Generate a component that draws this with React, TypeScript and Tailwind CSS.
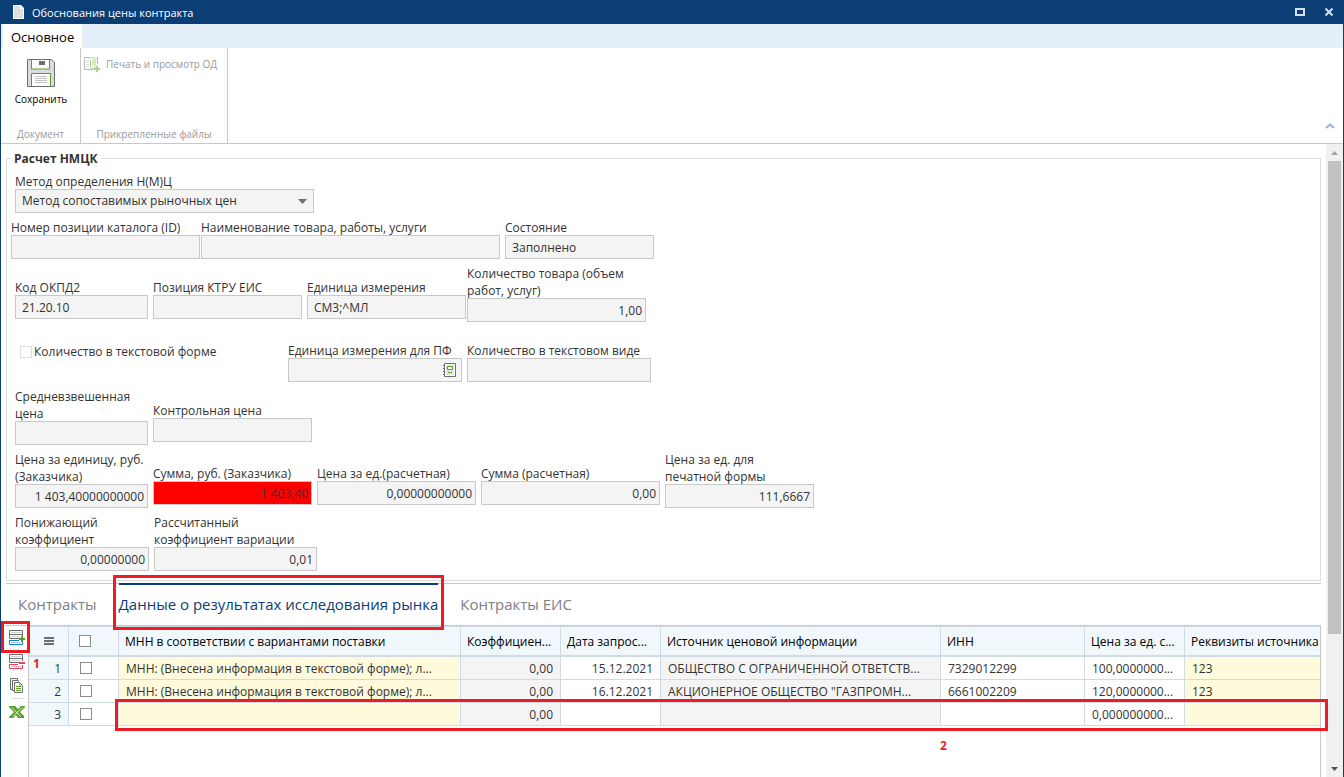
import { useId } from 'react';

interface FieldProps {
  label: string;
  value?: string;
  width: string;
  align?: 'left' | 'right';
  raised?: boolean;
  invalid?: boolean;
  picker?: boolean;
}

interface ResearchRow {
  id: number;
  mnn: string;
  ratio: string;
  date: string;
  source: string;
  inn: string;
  price: string;
  details: string;
}

const rows: ResearchRow[] = [
  {
    id: 1,
    mnn: 'МНН: (Внесена информация в текстовой форме); л...',
    ratio: '0,00',
    date: '15.12.2021',
    source: 'ОБЩЕСТВО С ОГРАНИЧЕННОЙ ОТВЕТСТВ...',
    inn: '7329012299',
    price: '100,0000000...',
    details: '123',
  },
  {
    id: 2,
    mnn: 'МНН: (Внесена информация в текстовой форме); л...',
    ratio: '0,00',
    date: '16.12.2021',
    source: 'АКЦИОНЕРНОЕ ОБЩЕСТВО "ГАЗПРОМН...',
    inn: '6661002209',
    price: '120,0000000...',
    details: '123',
  },
  { id: 3, mnn: '', ratio: '0,00', date: '', source: '', inn: '', price: '0,000000000...', details: '' },
];

const columns = [
  { title: 'МНН в соответствии с вариантами поставки', width: 'w-[342px]' },
  { title: 'Коэффициен...', width: 'w-[100px]' },
  { title: 'Дата запрос...', width: 'w-[100px]' },
  { title: 'Источник ценовой информации', width: 'w-[280px]' },
  { title: 'ИНН', width: 'w-[144px]' },
  { title: 'Цена за ед. с...', width: 'w-[100px]' },
  { title: 'Реквизиты источника', width: '' },
];

const PageIcon = () => (
  <svg width="11" height="14" viewBox="0 0 11 14">
    <path d="M0 0h8l3 3v11H0z" fill="#fff" />
    <path d="M1 1h6v3h3v9H1z" fill="#dedede" />
  </svg>
);

const SaveIcon = () => (
  <svg width="28" height="28" viewBox="0 0 28 28" fill="none">
    <path d="M.5.5h24l3 3v24H.5z" fill="#dcdcdc" stroke="#6d6e71" />
    <path d="M5 1h17v9H5z" fill="#fff" />
    <path d="M4.500 1v9h18V1" stroke="#5b9f22" />
    <path d="M12 2h6v4h-6z" fill="#6d6e71" />
    <path d="M5 15h18v12H5z" fill="#fff" />
    <path d="M4.500 27V14.500h19V27" stroke="#5b9f22" />
    <path d="M8 17.500h12M8 19.500h12M8 21.500h12M8 23.500h12" stroke="#c4c4c4" />
  </svg>
);

const AttachIcon = () => (
  <svg width="16" height="16" viewBox="0 0 16 16" fill="none">
    <path d="M6 1.500H.5v12H9M12.500 1.500h1v7" stroke="#b5b6b8" />
    <path d="M2 4.500h3M2 6.500h3M2 8.500h3M2 10.500h3" stroke="#d8d8d8" />
    <path d="M6.500 4v6.500a2 2 0 0 0 4.500 0V3a2.500 2.500 0 0 0-4.500 0M9 4v5" stroke="#acd08e" />
    <path d="M10 13h6M13 10v6" stroke="#acd08e" strokeWidth="2" />
  </svg>
);

const AddRowIcon = () => (
  <svg width="16" height="16" viewBox="0 0 16 16" fill="none">
    <path d="M10 8.500H.5v-8h13v4H.5M13.500 4v2" stroke="#6d6e71" />
    <path d="M2 2.500h10M2 6.500h9" stroke="#d0d0d0" />
    <path d="M10 10.500H.5v4h13V12" stroke="#1383cf" />
    <path d="M2 12.500h10" stroke="#a9d2ee" />
    <path d="M10 9h6M13 6v6" stroke="#5b9f22" strokeWidth="2" />
  </svg>
);

const RemoveRowIcon = () => (
  <svg width="16" height="16" viewBox="0 0 16 16" fill="none">
    <path d="M10 8.500H.5v-8h13v4H.5M13.500 4v3" stroke="#6d6e71" />
    <path d="M2 2.500h10M2 6.500h10" stroke="#d0d0d0" />
    <path d="M9 10.500H.5v4h13V11" stroke="#ee4056" />
    <path d="M2 12.500h10" stroke="#f6b3bb" />
    <path d="M10 9h6" stroke="#ee4056" strokeWidth="2" />
  </svg>
);

const CopyIcon = () => (
  <svg width="14" height="15" viewBox="0 0 14 15" fill="none">
    <path d="M2 11.500H.5V.5h7V2" stroke="#6d6e71" />
    <path d="M4 12.500H2.500v-10h6v1" stroke="#6d6e71" />
    <path d="M4.500 4.500h5l3 3v7h-8z" fill="#fff" stroke="#6d6e71" />
    <path d="M9.500 5v2.500h3" stroke="#b5b6b8" />
    <path d="M6 8.500h5M6 10.500h5M6 12.500h5" stroke="#5b9f22" />
  </svg>
);

const ExcelIcon = () => (
  <svg width="16" height="12" viewBox="0 0 16 12">
    <path d="M0 0h6l3 3 3-3h4v1l-5 5 4 4v2H9L7 9l-3 3H0v-1l5-5-5-5z" fill="#5b9f22" />
    <path d="M3 1.500 11.500 10.500M13 1.500 4 10.500" stroke="#fff" strokeWidth=".8" />
  </svg>
);

const BookIcon = () => (
  <svg width="13" height="14" viewBox="0 0 13 14" fill="none">
    <path d="M1.500.5h11v13h-11z" fill="#fff" stroke="#6d6e71" />
    <path d="M3 12V2h8v10z" fill="#e4e4e4" />
    <path d="M4.500 3.500h5v3h-5z" fill="#fff" stroke="#5b9f22" />
    <path d="M5 9.500h4" stroke="#5b9f22" />
    <path d="M0 2.500h2M0 5.500h2M0 8.500h2M0 11.500h2" stroke="#6d6e71" />
  </svg>
);

const Field = ({ label, value = '', width, align = 'left', raised, invalid, picker }: FieldProps) => {
  const id = useId();
  return (
    <div className={`flex shrink-0 flex-col ${width} ${raised ? 'pb-[3px]' : ''}`}>
      <label htmlFor={id} className="leading-[17px] whitespace-pre-line">{label}</label>
      <div className="relative -mt-px">
        <input
          id={id}
          readOnly
          defaultValue={value}
          className={`block h-6 w-full border border-[#c8c8c8] pr-[3px] pl-1.5 outline-none ${invalid ? 'bg-[#ff0000]' : 'bg-[#f4f4f4]'} ${align === 'right' ? 'text-right' : ''}`}
        />
        {picker && (
          <button type="button" aria-label="Выбрать" className="absolute top-[5px] right-1.5">
            <BookIcon />
          </button>
        )}
      </div>
    </div>
  );
};

const TitleBar = () => (
  <header className="flex h-6 items-center bg-[#0a3e75] px-3 text-[11px] text-white">
    <PageIcon />
    <h1 className="ml-2 flex-1 pt-0.5">Обоснования цены контракта</h1>
    <button type="button" aria-label="Развернуть" className="mr-5">
      <svg width="10" height="8" viewBox="0 0 10 8" fill="none">
        <path d="M1 1h8v6H1z" stroke="#d3dfea" strokeWidth="2" />
      </svg>
    </button>
    <button type="button" aria-label="Закрыть" className="-mr-0.5">
      <svg width="8" height="8" viewBox="0 0 8 8">
        <path d="M.5.5l7 7M7.500.5l-7 7" stroke="#d3dfea" strokeWidth="2" />
      </svg>
    </button>
  </header>
);

const Ribbon = () => (
  <div className="flex h-24 border-b border-[#c8c8c8] text-[10px] text-[#999]">
    <section className="flex w-20 flex-col items-center justify-between border-r border-[#c8c8c8] pt-[11px]">
      <button type="button" className="flex flex-col items-center gap-1 pl-px leading-4 text-black">
        <SaveIcon />
        Сохранить
      </button>
      <span className="leading-[18px]">Документ</span>
    </section>
    <section className="flex w-[147px] flex-col justify-between border-r border-[#c8c8c8] pt-1.5">
      <button type="button" disabled className="ml-[3px] flex items-center gap-1.5 leading-5 whitespace-nowrap">
        <AttachIcon />
        Печать и просмотр ОД
      </button>
      <span className="text-center leading-[18px]">Прикрепленные файлы</span>
    </section>
    <button type="button" aria-label="Свернуть ленту" className="mt-auto mr-2 mb-3.5 ml-auto">
      <svg width="10" height="6" viewBox="0 0 10 6" fill="none">
        <path d="M1 5l4-3.500L9 5" stroke="#9db4cf" strokeWidth="2" />
      </svg>
    </button>
  </div>
);

const CalculationForm = () => (
  <fieldset className="mx-[5px] border border-[#dcdcdc] pb-[9px] pl-2">
    <legend className="-ml-1 px-[3px] text-[12px] leading-[17px] font-bold">Расчет НМЦК</legend>
    <div className="flex flex-col gap-1.5 pt-1.5">
      <div className="flex w-[299px] flex-col">
        <label htmlFor="method" className="leading-[17px]">Метод определения Н(М)Ц</label>
        <div className="relative -mt-px">
          <select id="method" className="block h-6 w-full appearance-none border border-[#c8c8c8] bg-[#f4f4f4] px-1.5 outline-none">
            <option>Метод сопоставимых рыночных цен</option>
          </select>
          <svg className="pointer-events-none absolute top-2.5 right-[7px]" width="9" height="5" viewBox="0 0 9 5">
            <path d="M0 0h9L4.500 5z" fill="#6d6e71" />
          </svg>
        </div>
      </div>
      <div className="-ml-1 flex items-end gap-[5px]">
        <div className="flex gap-px">
          <Field label="Номер позиции каталога (ID)" width="w-[189px]" />
          <Field label="Наименование товара, работы, услуги" width="w-[299px]" />
        </div>
        <Field label="Состояние" value="Заполнено" width="w-[149px]" />
      </div>
      <div className="flex items-end gap-[5px]">
        <Field label="Код ОКПД2" value="21.20.10" width="w-[133px]" raised />
        <Field label="Позиция КТРУ ЕИС" width="w-[149px]" raised />
        <div className="flex items-end gap-px">
          <Field label="Единица измерения" value="СМ3;^МЛ" width="w-[159px]" raised />
          <Field label="Количество товара (объем работ, услуг)" value="1,00" width="w-[179px]" align="right" />
        </div>
      </div>
      <div className="mt-3.5 flex items-start gap-[5px]">
        <label className="flex h-5 w-[268px] items-center gap-0.5 pl-[5px]">
          <input type="checkbox" disabled className="size-3 appearance-none border border-[#dcdcdc] bg-white" />
          Количество в текстовой форме
        </label>
        <Field label="Единица измерения для ПФ" width="w-[174px]" picker />
        <Field label="Количество в текстовом виде" width="w-[184px]" />
      </div>
      <div className="flex items-end gap-[5px]">
        <Field label="Средневзвешенная цена" width="w-[133px]" />
        <Field label="Контрольная цена" width="w-[159px]" raised />
      </div>
      <div className="flex items-end gap-[5px]">
        <Field label="Цена за единицу, руб. (Заказчика)" value="1 403,40000000000" width="w-[133px]" align="right" />
        <Field label="Сумма, руб. (Заказчика)" value="1 403,40" width="w-[159px]" align="right" raised invalid />
        <Field label="Цена за ед.(расчетная)" value="0,00000000000" width="w-[159px]" align="right" raised />
        <Field label="Сумма (расчетная)" value="0,00" width="w-[179px]" align="right" raised />
        <Field label={'Цена за ед. для\nпечатной формы'} value="111,6667" width="w-[149px]" align="right" />
      </div>
      <div className="flex items-end gap-[5px]">
        <Field label="Понижающий коэффициент" value="0,00000000" width="w-[134px]" align="right" />
        <Field label="Рассчитанный коэффициент вариации" value="0,01" width="w-[163px]" align="right" />
      </div>
    </div>
  </fieldset>
);

const Tabs = () => (
  <nav className="mx-[5px] mt-0.5 flex h-[42px] gap-[22px] border-t border-[#c8c8c8] pl-3 text-[15px] leading-10 text-[#808080]">
    <a href="#contracts">Контракты</a>
    <a href="#research" className="relative -mt-px border-t-2 border-[#0a3e75] leading-[39px] text-[#0a3e75]">
      Данные о результатах исследования рынка
      <span className="pointer-events-none absolute -inset-x-[6px] -top-[10px] -bottom-[5px] z-10 border-[3px] border-[#ed1c24]" />
    </a>
    <a href="#eis">Контракты ЕИС</a>
  </nav>
);

const Toolbar = () => (
  <div className="relative flex w-6 shrink-0 flex-col border-t border-r border-[#c8c8c8] pt-1 pl-1">
    <span className="pointer-events-none absolute -top-[5px] -left-1 z-10 h-8 w-[29px] border-[3px] border-[#ed1c24]" />
    <button type="button" aria-label="Добавить строку" className="flex h-6 items-start"><AddRowIcon /></button>
    <button type="button" aria-label="Удалить строку" className="flex h-6 items-start"><RemoveRowIcon /></button>
    <button type="button" aria-label="Копировать" className="ml-px flex h-5 items-start"><CopyIcon /></button>
    <hr className="mb-[7px] ml-0.5 w-3 border-[#dcdcdc]" />
    <button type="button" aria-label="Выгрузить в Excel"><ExcelIcon /></button>
  </div>
);

const cell = 'overflow-hidden border-r border-b border-[#cfdae5] whitespace-nowrap px-[7px] pt-0.5';

const Checkbox = ({ label }: { label: string }) => (
  <input type="checkbox" aria-label={label} className="block size-3 appearance-none border border-[#8c8c8c] bg-white" />
);

const ResearchTable = () => (
  <div className="relative min-w-0 flex-1 border-t border-r border-[#c8c8c8]">
    <table className="w-full table-fixed border-separate border-spacing-0 border-t border-[#cfdae5] text-left">
      <thead>
        <tr className="h-[30px] bg-[#f0f8fc] text-black">
          <th className="w-10 border-r border-b-2 border-[#cfdae5]">
            <svg className="mx-auto" width="10" height="8" viewBox="0 0 10 8">
              <path d="M0 1h10M0 4h10M0 7h10" stroke="#6d6e71" strokeWidth="2" />
            </svg>
          </th>
          <th className="w-[50px] border-r border-b-2 border-[#cfdae5] pl-2.5"><Checkbox label="Выбрать все" /></th>
          {columns.map((c) => (
            <th key={c.title} className={`overflow-hidden border-r border-b-2 border-[#cfdae5] pt-0.5 pl-1.5 font-normal whitespace-nowrap last:border-r-0 ${c.width}`}>
              {c.title}
            </th>
          ))}
        </tr>
      </thead>
      <tbody>
        {rows.map((row) => (
          <tr key={row.id} className="h-[23px]">
            <td className={`${cell} bg-[#f0f8fc] text-right`}>{row.id}</td>
            <td className="border-r border-b border-[#cfdae5] pl-[11px]"><Checkbox label={`Строка ${row.id}`} /></td>
            <td className={`${cell} bg-[#fffadb]`}>{row.mnn}</td>
            <td className={`${cell} bg-[#f4f4f4] text-right`}>{row.ratio}</td>
            <td className={`${cell} text-right`}>{row.date}</td>
            <td className={`${cell} bg-[#f4f4f4]`}>{row.source}</td>
            <td className={cell}>{row.inn}</td>
            <td className={cell}>{row.price}</td>
            <td className={`${cell} border-r-0 bg-[#fffadb]`}>{row.details}</td>
          </tr>
        ))}
      </tbody>
    </table>
    <span className="pointer-events-none absolute top-[73px] -right-2 left-[86px] z-10 h-8 border-[3px] border-[#ed1c24]" />
    <b className="absolute top-[30px] left-1 text-[12px] leading-4 text-[#ed1c24]">1</b>
    <b className="absolute top-[112px] left-[911px] text-[12px] leading-4 text-[#ed1c24]">2</b>
  </div>
);

const Scrollbar = () => (
  <div className="flex w-[17px] shrink-0 flex-col items-center justify-between bg-[#f0f0f0]">
    <div className="flex h-[17px] shrink-0 items-center">
      <svg width="7" height="4" viewBox="0 0 7 4"><path d="M0 4h7L3.500 0z" fill="#a3a3a3" /></svg>
    </div>
    <div className="flex w-[13px] flex-1 flex-col">
      <div className="h-[79%] bg-[#c1c1c1]" />
    </div>
    <div className="flex h-[17px] shrink-0 items-center">
      <svg width="7" height="4" viewBox="0 0 7 4"><path d="M0 0h7L3.500 4z" fill="#505050" /></svg>
    </div>
  </div>
);

const App = () => (
  <div className="flex min-h-screen flex-col border-x border-[#0a3e75] bg-white font-['Open_Sans','Noto_Sans',sans-serif] text-[12px] text-[#333]">
    <TitleBar />
    <div className="flex h-6 bg-[#e5effa] pl-0.5">
      <button type="button" className="bg-white px-2 pt-[3px] text-[13px] text-black">Основное</button>
    </div>
    <Ribbon />
    <div className="flex flex-1">
      <main className="flex min-w-0 flex-1 flex-col pt-1.5">
        <CalculationForm />
        <Tabs />
        <div className="mr-[5px] ml-1 flex flex-1">
          <Toolbar />
          <ResearchTable />
        </div>
      </main>
      <Scrollbar />
    </div>
  </div>
);

export default App;
